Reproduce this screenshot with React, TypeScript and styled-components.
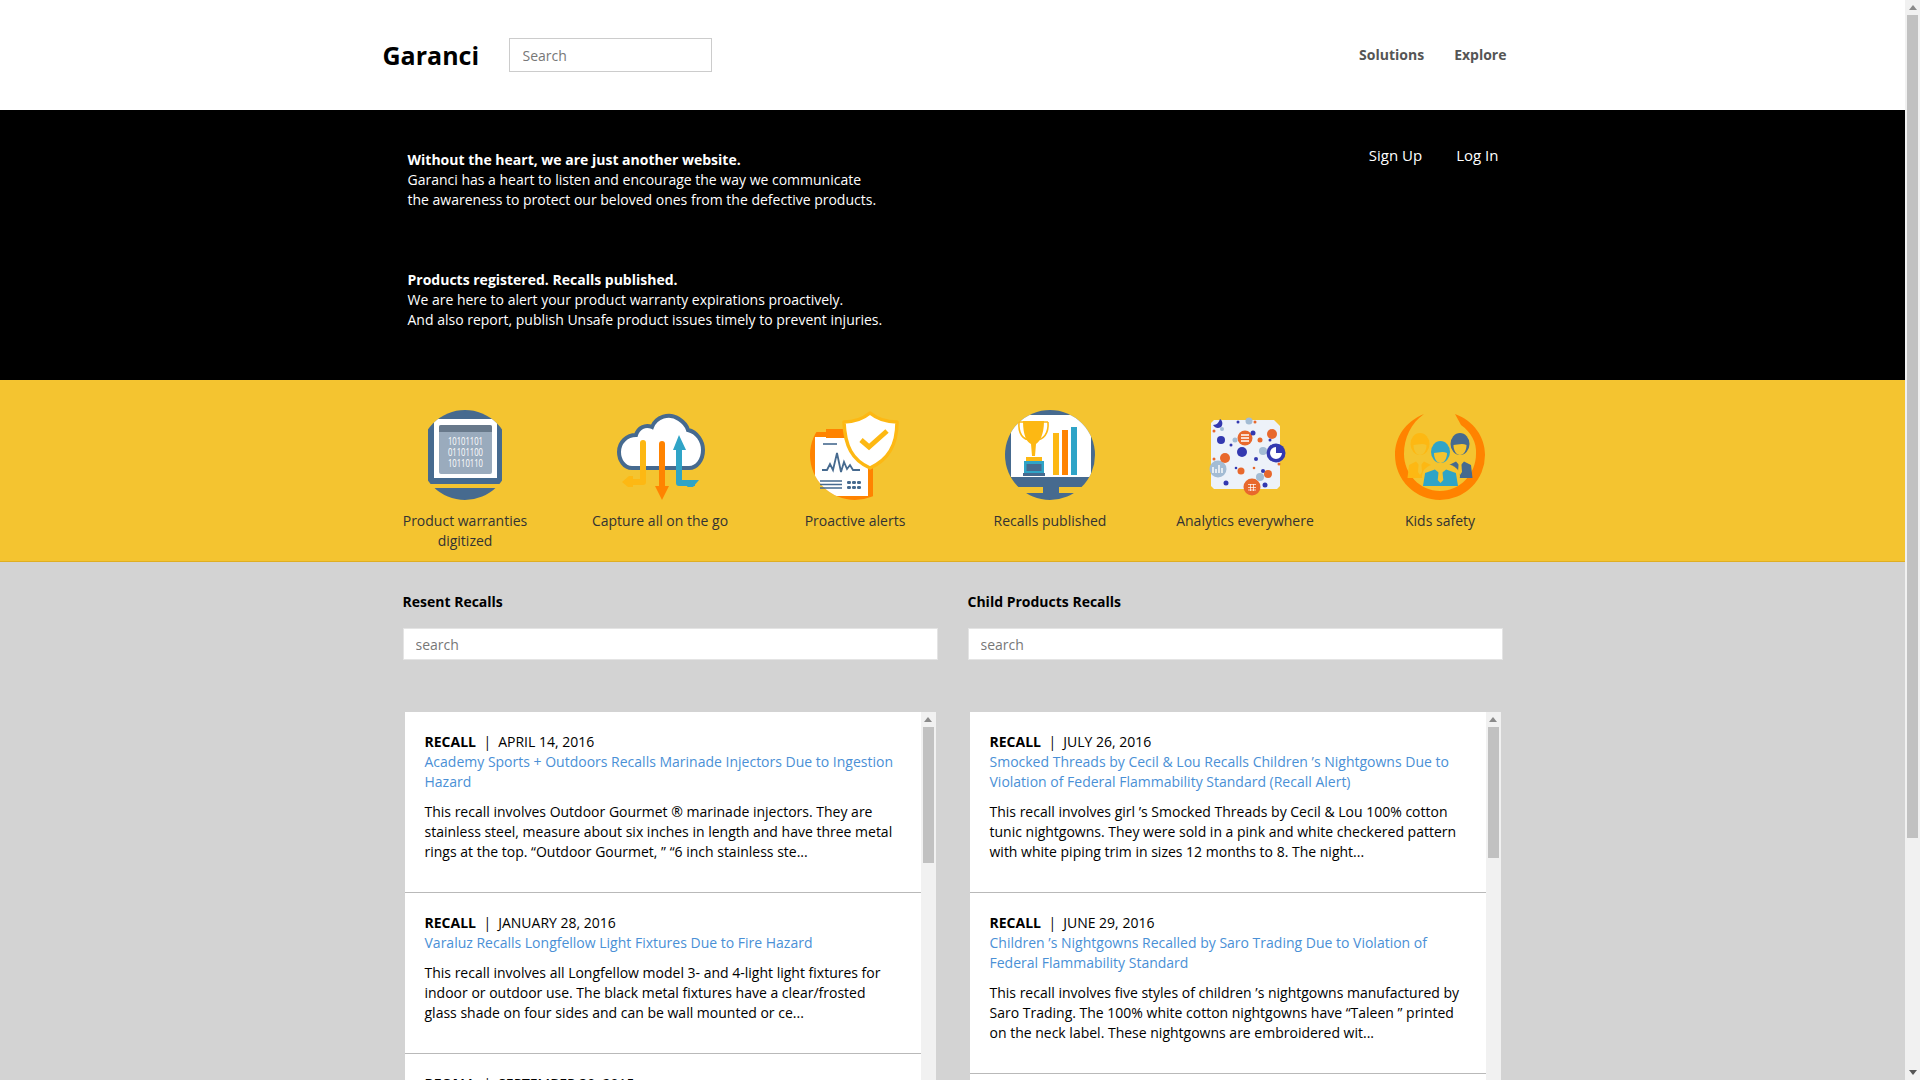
import React from 'react'
import styled, { createGlobalStyle } from 'styled-components'

const BLUE = '#466a8f'
const ORANGE = '#ff8300'
const AMBER = '#fdb813'
const TEAL = '#2fa4c7'
const SAFFRON = '#f4c430'

const GlobalStyle = createGlobalStyle`
  html, body {
    margin: 0;
    padding: 0;
  }
  body {
    font-family: "Open Sans", "Liberation Sans", sans-serif;
    font-size: 14px;
    line-height: 20px;
    color: #000;
    background: #fff;
  }
  * {
    box-sizing: border-box;
  }
`

const Page = styled.div`
  width: 1905px;
`

const Rail = styled.div`
  width: 15px;
  flex: none;
  display: flex;
  flex-direction: column;
  background: #f1f1f1;
`

const PageRail = styled(Rail)`
  position: fixed;
  top: 0;
  right: 0;
  bottom: 0;
`

const RailThumb = styled.div<{ $height: number }>`
  height: ${props => props.$height}px;
  margin: 0 2px;
  background: #c1c1c1;
`

const RailArrow = styled.div<{ $down?: boolean }>`
  height: 15px;
  flex: none;
  margin-top: ${props => (props.$down ? 'auto' : '0')};
  display: flex;
  align-items: center;
  justify-content: center;
  &::after {
    content: '';
    border-left: 4px solid transparent;
    border-right: 4px solid transparent;
    border-bottom: ${props => (props.$down ? '0' : '5px solid #8a8a8a')};
    border-top: ${props => (props.$down ? '5px solid #555' : '0')};
  }
`

const Container = styled.div`
  width: 1170px;
  margin: 0 auto;
`

const Header = styled(Container)`
  height: 110px;
  display: flex;
  align-items: center;
  padding: 0 31px 0 15px;
`

const Logo = styled.div`
  font-size: 25px;
  font-weight: 700;
  line-height: 30px;
  width: 126px;
`

const HeaderSearch = styled.input`
  width: 203px;
  height: 34px;
  padding: 0 13px;
  border: 1px solid #ccc;
  font: inherit;
  color: #555;
  outline: none;
  &::placeholder {
    color: #777;
  }
`

const Nav = styled.nav`
  margin-left: auto;
  display: flex;
  gap: 30px;
`

const NavLink = styled.a`
  font-weight: 700;
  color: #555;
`

const Hero = styled.section`
  background: #000;
  color: #fff;
  height: 270px;
`

const HeroInner = styled(Container)`
  display: flex;
  justify-content: space-between;
  padding: 35px 39px 0 40px;
`

const HeroCopy = styled.div`
  padding-top: 5px;
`

const HeroBlock = styled.p`
  margin: 0 0 60px;
`

const AuthLinks = styled.div`
  display: flex;
  gap: 34px;
  font-size: 15px;
`

const Features = styled.section`
  background: ${SAFFRON};
  border-bottom: 1px solid #dfae22;
  height: 182px;
`

const FeatureGrid = styled(Container)`
  display: grid;
  grid-template-columns: repeat(6, 195px);
  padding-top: 30px;
`

const Feature = styled.div`
  display: flex;
  flex-direction: column;
  align-items: center;
  text-align: center;
  color: #333;
  padding: 0 15px;
  svg {
    display: block;
    flex: none;
    margin-bottom: 11px;
  }
`

const Recalls = styled.section`
  background: #d3d3d3;
  padding: 30px 0 65px;
`

const Columns = styled(Container)`
  display: grid;
  grid-template-columns: 535px 535px;
  column-gap: 30px;
  padding-left: 35px;
`

const ColumnTitle = styled.h2`
  margin: 0 0 16px;
  font-size: 14px;
  line-height: 20px;
  font-weight: 700;
`

const ColumnSearch = styled.input`
  display: block;
  width: 100%;
  height: 32px;
  padding: 0 12px;
  border: 1px solid #e4e4e4;
  background: #fff;
  font: inherit;
  outline: none;
  &::placeholder {
    color: #777;
  }
`

const RecallList = styled.div`
  margin: 52px 2px 0;
  height: 600px;
  display: flex;
  background: #fff;
`

const RecallBody = styled.div`
  flex: 1;
  min-width: 0;
  overflow: hidden;
`

const RecallItem = styled.article`
  padding: 20px 20px 20px;
  border-bottom: 1px solid #b9b9b9;
`

const RecallTag = styled.strong`
  font-weight: 700;
`

const MetaDivider = styled.span`
  margin: 0 7px 0 7.5px;
`

const RecallTitle = styled.a`
  display: block;
  color: #4a90d6;
`

const RecallText = styled.p`
  margin: 10px 0;
  color: #000;
`

const clipCircle = (id: string) => (
  <clipPath id={id}>
    <circle cx="45" cy="45" r="45" />
  </clipPath>
)

const DigitizedIcon = () => (
  <svg width="90" height="90" viewBox="0 0 90 90">
    {clipCircle('c1')}
    <g clipPath="url(#c1)">
      <rect x="8" y="0" width="74" height="74" rx="1" fill={BLUE} />
      <rect x="0" y="78" width="90" height="12" fill={BLUE} />
      <rect x="14" y="9" width="63" height="59" fill="#fff" />
      <rect x="19" y="15" width="53" height="49" rx="2" fill="#9aabbd" />
      <path d="M19 22v-5a2 2 0 0 1 2-2h49a2 2 0 0 1 2 2v5z" fill="#68798b" />
      <text fill="#fff" fontFamily="'Open Sans', sans-serif" fontSize="11.5" textAnchor="middle">
        <tspan x="45.5" y="35" textLength="35" lengthAdjust="spacingAndGlyphs">10101101</tspan>
        <tspan x="45.5" y="46" textLength="35" lengthAdjust="spacingAndGlyphs">01101100</tspan>
        <tspan x="45.5" y="57" textLength="35" lengthAdjust="spacingAndGlyphs">10110110</tspan>
      </text>
    </g>
  </svg>
)

const CaptureIcon = () => (
  <svg width="90" height="90" viewBox="0 0 90 90">
    <path
      d="M17 58C9 58 4 50 4 42C4 32 12 25 21 25C23 18 30 14 37 17C41 7 54 2 64 9C70 13 72 16 73 20C82 22 88 31 88 40C88 50 82 58 74 58Z"
      fill="#fff"
      stroke={BLUE}
      strokeWidth="4"
    />
    <path d="M28 33V72H13" fill="none" stroke={AMBER} strokeWidth="6" strokeLinecap="round" strokeLinejoin="round" />
    <path d="M14 66L7 72L13 77H18V66Z" fill={AMBER} />
    <path d="M47 34V78" fill="none" stroke={ORANGE} strokeWidth="6" strokeLinecap="round" />
    <path d="M40 76H54L47 90Z" fill={ORANGE} />
    <path d="M64 38V73H80" fill="none" stroke={TEAL} strokeWidth="6" strokeLinejoin="round" />
    <path d="M64 25L71 40H58Z" fill={TEAL} />
    <path d="M76 70H84L78 77H72Z" fill={TEAL} />
  </svg>
)

const AlertIcon = () => (
  <svg width="90" height="90" viewBox="0 0 90 90">
    {clipCircle('c3')}
    <g clipPath="url(#c3)">
      <rect x="0" y="22" width="63" height="68" fill={ORANGE} />
      <rect x="5" y="27" width="53" height="59" fill="#fff" />
    </g>
    <rect x="16" y="19" width="24" height="9" fill={ORANGE} />
    <path d="M13 34H27" stroke={BLUE} strokeWidth="1.6" />
    <path
      d="M12 60H17L20 54L23 60L27 43L31 62L34 52L37 59L40 55L43 60H50"
      fill="none"
      stroke={BLUE}
      strokeWidth="1.8"
    />
    <path d="M10 71H32M10 74.5H32M10 78H32" stroke={BLUE} strokeWidth="1.4" />
    <g fill={BLUE}>
      {[37, 42, 47].map(x => (
        <React.Fragment key={x}>
          <rect x={x} y="71" width="4" height="3" rx="1.2" />
          <rect x={x} y="76" width="4" height="3" rx="1.2" />
        </React.Fragment>
      ))}
    </g>
    <path
      d="M60 3C66 8 76 12 87 12C87 36 78 50 60 58C42 50 35 36 34 12C44 12 54 8 60 3Z"
      fill="#fff"
      stroke={AMBER}
      strokeWidth="3.5"
      strokeLinejoin="round"
    />
    <path d="M51 30L59 37L77 21" fill="none" stroke={AMBER} strokeWidth="5" />
  </svg>
)

const PublishedIcon = () => (
  <svg width="90" height="90" viewBox="0 0 90 90">
    {clipCircle('c4')}
    <g clipPath="url(#c4)">
      <rect x="0" y="0" width="90" height="77" fill={BLUE} />
      <rect x="0" y="83" width="90" height="7" fill={BLUE} />
      <rect x="38" y="77" width="16" height="6" fill={BLUE} />
      <rect x="6" y="5" width="80" height="62" fill="#fff" />
    </g>
    <path d="M14 12H43M14 12C13 24 18 30 26 30M43 12C44 24 38 30 31 30" fill="none" stroke={AMBER} strokeWidth="1.6" />
    <path d="M18 11H39C39 26 34 32 31 34L30 46H27L26 34C22 32 18 26 18 11Z" fill={AMBER} />
    <rect x="21" y="47" width="16" height="4" fill={AMBER} />
    <rect x="19" y="51" width="20" height="12" fill={TEAL} />
    <rect x="21.5" y="54" width="15" height="7" fill={BLUE} />
    <rect x="18" y="63" width="22" height="3" fill={BLUE} />
    <rect x="48" y="23" width="6" height="42" fill={AMBER} />
    <rect x="57" y="20" width="6" height="45" fill={ORANGE} />
    <rect x="66" y="17" width="6" height="48" fill={TEAL} />
  </svg>
)

const DARK_DOT = '#3339b0'
const HOT_DOT = '#e8682c'
const PALE_DOT = '#a3bcd4'

const analyticsDots: [number, number, number, string][] = [
  [45, 28, 7.5, HOT_DOT],
  [72, 24, 5, HOT_DOT],
  [18, 59, 8.5, PALE_DOT],
  [52, 77, 8.5, HOT_DOT],
  [25, 48, 5, HOT_DOT],
  [42, 42, 5, DARK_DOT],
  [21, 30, 4, DARK_DOT],
  [63, 41, 4, PALE_DOT],
  [41, 61, 3.5, HOT_DOT],
  [68, 64, 4, HOT_DOT],
  [60, 67, 4, PALE_DOT],
  [65, 75, 2.5, DARK_DOT],
  [26, 73, 2.5, DARK_DOT],
  [56, 49, 2, DARK_DOT],
  [60, 30, 2.5, HOT_DOT],
  [53, 23, 2.5, DARK_DOT],
  [49, 11, 3.5, PALE_DOT],
  [55, 12, 1.5, HOT_DOT],
  [38, 12, 1.5, DARK_DOT],
  [35, 30, 2.5, PALE_DOT],
  [31, 35, 1.5, DARK_DOT],
  [14, 49, 1.5, HOT_DOT],
  [14, 21, 1.5, HOT_DOT],
  [22, 19, 2, PALE_DOT],
  [79, 54, 1.5, HOT_DOT],
  [63, 61, 2, DARK_DOT],
  [54, 58, 1.3, HOT_DOT],
  [36, 58, 1.3, DARK_DOT],
  [70, 30, 1.5, DARK_DOT],
]

const AnalyticsIcon = () => (
  <svg width="90" height="90" viewBox="0 0 90 90">
    <path d="M14 10H74L80 16V76L77 79H14L11 76V13Z" fill="#edf2f9" />
    {analyticsDots.map(([cx, cy, r, fill]) => (
      <circle key={`${cx}-${cy}`} cx={cx} cy={cy} r={r} fill={fill} />
    ))}
    <path d="M13 15C17 15 19 12 20 9C23 11 23 15 21 17C18 19 15 18 13 15Z" fill={DARK_DOT} />
    <circle cx="76" cy="43" r="9.5" fill={DARK_DOT} />
    <path d="M76 37A6 6 0 1 0 82 43H76Z" fill="#fff" />
    <path d="M48 74.5H56M48 77.5H56M48 80H56M50.5 74V81M53.5 74V81" stroke="#fff" strokeWidth="0.7" fill="none" />
    <path d="M13 63V57M16 63V59M19 63V55M22 63V58" stroke="#fff" strokeWidth="1.4" />
    <path d="M41 25H49M41 28H49M41 31H49" stroke="#fff" strokeWidth="1.4" />
  </svg>
)

const Person = ({ x, y, color, width = 1 }: { x: number; y: number; color: string; width?: number }) => (
  <g transform={`translate(${x} ${y})`}>
    <g transform={`scale(${width} 1)`}>
      <path d="M-12.5 34L-11 21L-4 17.5L0 22L4 17.5L11 21L12.5 34Z" fill={color} />
      <path d="M-1.4 20H1.4L2 28L0 31L-2 28Z" fill={SAFFRON} />
    </g>
    <ellipse cx="0" cy="0" rx="9.5" ry="11" fill={color} />
    <path d="M-6.5 1C-3 1 2 -1 6.5 1C6.5 7 3.5 11 0 11C-3.5 11 -6.5 7 -6.5 1Z" fill={SAFFRON} />
  </g>
)

const KidsIcon = () => (
  <svg width="90" height="90" viewBox="0 0 90 90">
    <path
      d="M29 4C10 12 0 27 0 45A45 45 0 0 0 90 45C90 27 79 11 60 4L66 15C76 22 82 33 81 44C81 64 65 81 45 81C25 81 9 64 9 44C9 28 16 13 29 4Z"
      fill={ORANGE}
    />
    <Person x={25} y={34} color={AMBER} />
    <Person x={65} y={34} color={BLUE} />
    <ellipse cx="46" cy="66" rx="19" ry="13" fill={SAFFRON} />
    <Person x={45.5} y={42} color={TEAL} width={1.4} />
  </svg>
)

const features = [
  { label: 'Product warranties digitized', icon: <DigitizedIcon /> },
  { label: 'Capture all on the go', icon: <CaptureIcon /> },
  { label: 'Proactive alerts', icon: <AlertIcon /> },
  { label: 'Recalls published', icon: <PublishedIcon /> },
  { label: 'Analytics everywhere', icon: <AnalyticsIcon /> },
  { label: 'Kids safety', icon: <KidsIcon /> },
]

const columns = [
  {
    title: 'Resent Recalls',
    thumb: 136,
    items: [
      {
        date: 'APRIL 14, 2016',
        title: 'Academy Sports + Outdoors Recalls Marinade Injectors Due to Ingestion Hazard',
        text: 'This recall involves Outdoor Gourmet ® marinade injectors. They are stainless steel, measure about six inches in length and have three metal rings at the top. “Outdoor Gourmet, ” “6 inch stainless ste...',
      },
      {
        date: 'JANUARY 28, 2016',
        title: 'Varaluz Recalls Longfellow Light Fixtures Due to Fire Hazard',
        text: 'This recall involves all Longfellow model 3- and 4-light light fixtures for indoor or outdoor use. The black metal fixtures have a clear/frosted glass shade on four sides and can be wall mounted or ce...',
      },
      { date: 'SEPTEMBER 30, 2015' },
    ],
  },
  {
    title: 'Child Products Recalls',
    thumb: 131,
    items: [
      {
        date: 'JULY 26, 2016',
        title: 'Smocked Threads by Cecil & Lou Recalls Children ’s Nightgowns Due to Violation of Federal Flammability Standard (Recall Alert)',
        text: 'This recall involves girl ’s Smocked Threads by Cecil & Lou 100% cotton tunic nightgowns. They were sold in a pink and white checkered pattern with white piping trim in sizes 12 months to 8. The night...',
      },
      {
        date: 'JUNE 29, 2016',
        title: 'Children ’s Nightgowns Recalled by Saro Trading Due to Violation of Federal Flammability Standard',
        text: 'This recall involves five styles of children ’s nightgowns manufactured by Saro Trading. The 100% white cotton nightgowns have “Taleen ” printed on the neck label. These nightgowns are embroidered wit...',
      },
    ],
  },
]

const App: React.FC = () => (
  <Page>
    <GlobalStyle />
    <Header>
      <Logo>Garanci</Logo>
      <HeaderSearch placeholder="Search" />
      <Nav>
        <NavLink>Solutions</NavLink>
        <NavLink>Explore</NavLink>
      </Nav>
    </Header>

    <Hero>
      <HeroInner>
        <HeroCopy>
          <HeroBlock>
            <strong>Without the heart, we are just another website.</strong>
            <br />
            Garanci has a heart to listen and encourage the way we communicate
            <br />
            the awareness to protect our beloved ones from the defective products.
          </HeroBlock>
          <HeroBlock>
            <strong>Products registered. Recalls published.</strong>
            <br />
            We are here to alert your product warranty expirations proactively.
            <br />
            And also report, publish Unsafe product issues timely to prevent injuries.
          </HeroBlock>
        </HeroCopy>
        <AuthLinks>
          <span>Sign Up</span>
          <span>Log In</span>
        </AuthLinks>
      </HeroInner>
    </Hero>

    <Features>
      <FeatureGrid>
        {features.map(feature => (
          <Feature key={feature.label}>
            {feature.icon}
            {feature.label}
          </Feature>
        ))}
      </FeatureGrid>
    </Features>

    <Recalls>
      <Columns>
        {columns.map(column => (
          <div key={column.title}>
            <ColumnTitle>{column.title}</ColumnTitle>
            <ColumnSearch placeholder="search" />
            <RecallList>
              <RecallBody>
                {column.items.map(item => (
                  <RecallItem key={item.date}>
                    <div>
                      <RecallTag>RECALL</RecallTag>
                      <MetaDivider>|</MetaDivider>
                      {item.date}
                    </div>
                    {item.title && <RecallTitle>{item.title}</RecallTitle>}
                    {item.text && <RecallText>{item.text}</RecallText>}
                  </RecallItem>
                ))}
              </RecallBody>
              <Rail>
                <RailArrow />
                <RailThumb $height={column.thumb} />
                <RailArrow $down />
              </Rail>
            </RecallList>
          </div>
        ))}
      </Columns>
    </Recalls>

    <PageRail>
      <RailArrow />
      <RailThumb $height={823} />
      <RailArrow $down />
    </PageRail>
  </Page>
)

export default App
